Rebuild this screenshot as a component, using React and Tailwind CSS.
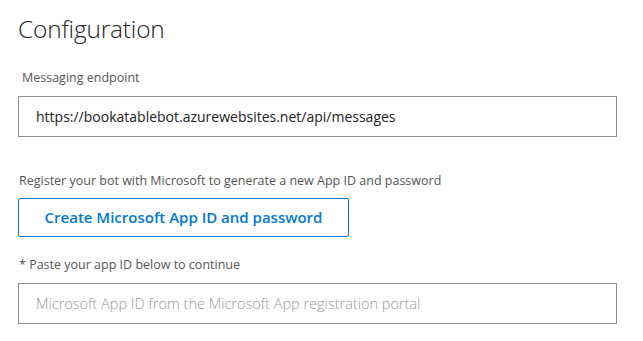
export default function App() {
  return (
    <div
      className="w-[643px] h-[341px] bg-white px-[18px] pt-[14px] text-[#333]"
      style={{ fontFamily: '"Open Sans", "Noto Sans", sans-serif' }}
    >
      <h1 className="text-[24.5px] leading-[30px] font-light text-[#222] tracking-[-0.2px]">
        Configuration
      </h1>

      <label className="mt-[25px] block pl-[4px] text-[12.5px] leading-[18px] text-[#555]">
        Messaging endpoint
      </label>
      <div className="mt-[9px] flex h-[41px] w-[599px] items-center border-[1.5px] border-[#8f8f8f] px-[17px] text-[14px] text-[#222]">
        https://bookatablebot.azurewebsites.net/api/messages
      </div>

      <p className="mt-[35px] pl-[1px] text-[12.5px] leading-[18px] text-[#555]">
        Register your bot with Microsoft to generate a new App ID and password
      </p>
      <button className="mt-[8px] flex h-[39px] w-[331px] items-center justify-center rounded-[2px] border-[1.5px] border-[#0078d4] text-[15px] font-semibold text-[#0078d4]">
        Create Microsoft App ID and password
      </button>

      <p className="mt-[19px] pl-[1px] text-[12.5px] leading-[18px] text-[#555]">
        * Paste your app ID below to continue
      </p>
      <div className="mt-[9px] flex h-[41px] w-[599px] items-center border-[1.5px] border-[#8f8f8f] px-[17px] text-[14.5px] font-light text-[#999]">
        Microsoft App ID from the Microsoft App registration portal
      </div>
    </div>
  );
}
